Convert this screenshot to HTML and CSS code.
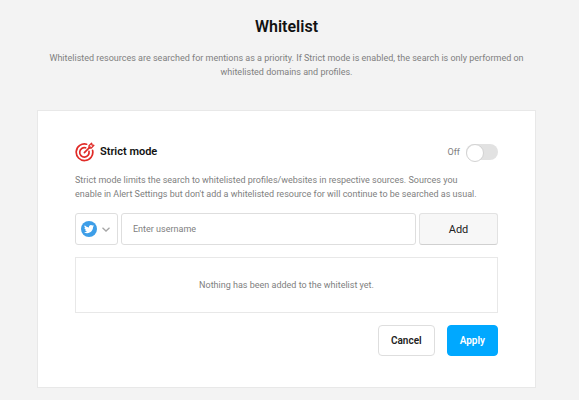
FILE: index.html
```html
<!DOCTYPE html>
<html lang="en">
<head>
    <meta charset="UTF-8">
    <meta name="viewport" content="width=device-width, initial-scale=1.0">
    <title>Whitelist</title>
    <link rel="stylesheet" href="styles.css">
</head>
<body>
    <main class="container">
        <h1>Whitelist</h1>
        <p class="intro">Whitelisted resources are searched for mentions as a priority. If Strict mode is enabled, the search is only performed on whitelisted domains and profiles.</p>

        <form class="card">
            <div class="card-header">
                <svg class="target-icon" viewBox="0 0 20 20" fill="none" stroke="#e02b27" stroke-width="1.7" stroke-linecap="round" stroke-linejoin="round">
                    <path d="M11.6 2.2A8.3 8.3 0 1 0 17.6 8.4"/>
                    <path d="M10.6 5.8A4.7 4.7 0 1 0 14 9.4"/>
                    <path d="M9.4 10.6L15 5"/>
                    <path d="M14 6V3.700L16.600 1.100L17 3L18.900 3.400L16.300 6Z" stroke-width="1.3"/>
                </svg>
                <h2>Strict mode</h2>
                <label class="toggle-label" for="strict">Off</label>
                <input type="checkbox" id="strict" class="toggle">
            </div>

            <p class="description">Strict mode limits the search to whitelisted profiles/websites in respective sources. Sources you enable in Alert Settings but don't add a whitelisted resource for will continue to be searched as usual.</p>

            <div class="add-row">
                <div class="source">
                    <select class="source-select" aria-label="Source">
                        <option>Twitter</option>
                    </select>
                    <svg class="twitter-icon" viewBox="0 0 32 32">
                        <circle cx="16" cy="16" r="16" fill="#3d9ee8"/>
                        <g transform="translate(6 6) scale(.84)">
                            <path fill="#fff" d="M23.95 4.57a10 10 0 0 1-2.82.77 4.96 4.96 0 0 0 2.16-2.72 9.9 9.9 0 0 1-3.12 1.19 4.92 4.92 0 0 0-8.38 4.48A13.93 13.93 0 0 1 1.64 3.16a4.92 4.92 0 0 0 1.52 6.57 4.9 4.9 0 0 1-2.23-.61v.06a4.92 4.92 0 0 0 3.95 4.83 5 5 0 0 1-2.21.08 4.94 4.94 0 0 0 4.6 3.42A9.87 9.87 0 0 1 0 19.54a14 14 0 0 0 7.55 2.21c9.05 0 14-7.5 14-13.98 0-.21 0-.42-.02-.63a9.94 9.94 0 0 0 2.42-2.57z"/>
                        </g>
                    </svg>
                    <svg class="chevron" viewBox="0 0 8 5" fill="none" stroke="#a6a6a6" stroke-width="1.3">
                        <path d="M.5 .8L4 4L7.5 .8"/>
                    </svg>
                </div>
                <input type="text" class="username" placeholder="Enter username" aria-label="Username">
                <button type="button" class="btn-add">Add</button>
            </div>

            <div class="empty">Nothing has been added to the whitelist yet.</div>

            <div class="actions">
                <button type="button" class="btn">Cancel</button>
                <button type="submit" class="btn btn-primary">Apply</button>
            </div>
        </form>
    </main>
</body>
</html>
```
FILE: styles.css
```css
* {
    box-sizing: border-box;
}
body {
    margin: 0;
    background-color: #f3f3f3;
    color: #808080;
    font-family: Roboto, Arial, sans-serif;
    font-size: 9px;
    line-height: 14px;
}
.container {
    max-width: 800px;
    margin: 0 auto;
    padding: 16px 43px 12px 37px;
}
h1 {
    margin: 0 0 14px;
    color: #111;
    font-size: 16px;
    font-weight: 600;
    line-height: 21px;
    text-align: center;
}
.intro {
    margin: 0 0 31px;
    text-align: center;
}
.card {
    padding: 31px 37px;
    border: 1px solid #e8e8e8;
    background-color: white;
}
.card-header {
    display: flex;
    align-items: center;
    margin-bottom: 11px;
}
.target-icon {
    width: 20px;
    height: 20px;
    margin-right: 5px;
}
h2 {
    margin: 0;
    color: #111;
    font-size: 11px;
    font-weight: 600;
}
.toggle-label {
    margin-left: auto;
}
.toggle {
    appearance: none;
    width: 32px;
    height: 16px;
    margin: 0 0 0 6px;
    border-radius: 8px;
    background-color: #e2e2e2;
    cursor: pointer;
}
.toggle::before {
    content: "";
    display: block;
    width: 16px;
    height: 16px;
    border: 1px solid #d2d2d2;
    border-radius: 50%;
    background-color: white;
}
.toggle:checked {
    background-color: #00a8ff;
}
.toggle:checked::before {
    margin-left: auto;
}
.description {
    margin: 0 0 12px;
    padding-right: 12px;
}
.add-row {
    display: flex;
    gap: 3px;
    height: 32px;
    margin-bottom: 12px;
}
/* icon and chevron share the grid cell with the select */
.source {
    display: grid;
    flex: none;
    width: 43px;
    align-items: center;
}
.source > * {
    grid-area: 1 / 1;
}
.source-select {
    appearance: none;
    width: 100%;
    height: 100%;
    border: 1px solid #dedede;
    border-radius: 3px;
    background-color: white;
    color: transparent;
    font-size: 10px;
}
.twitter-icon {
    width: 16px;
    height: 16px;
    margin-left: 6px;
    pointer-events: none;
}
.chevron {
    width: 8px;
    height: 5px;
    margin-left: 27px;
    pointer-events: none;
}
.username {
    flex: 1;
    min-width: 0;
    padding: 0 11px;
    border: 1px solid #dedede;
    border-radius: 3px;
    color: #333;
    font: inherit;
}
.username::placeholder {
    color: #808080;
}
button {
    font-family: inherit;
    cursor: pointer;
}
.btn-add {
    width: 79px;
    border: 1px solid #e2e2e2;
    border-bottom-color: #d0d0d0;
    border-radius: 3px;
    background-color: #f7f7f7;
    color: #222;
    font-size: 11px;
}
.empty {
    padding: 20px;
    border: 1px solid #e8e8e8;
    text-align: center;
}
.actions {
    display: flex;
    justify-content: flex-end;
    gap: 12px;
    margin-top: 12px;
}
.btn {
    height: 31px;
    padding: 0 12px;
    border: 1px solid #dedede;
    border-radius: 4px;
    background-color: white;
    color: #222;
    font-size: 10px;
    font-weight: 600;
}
.btn-primary {
    border-color: #00a8ff;
    background-color: #00a8ff;
    color: white;
}
```
